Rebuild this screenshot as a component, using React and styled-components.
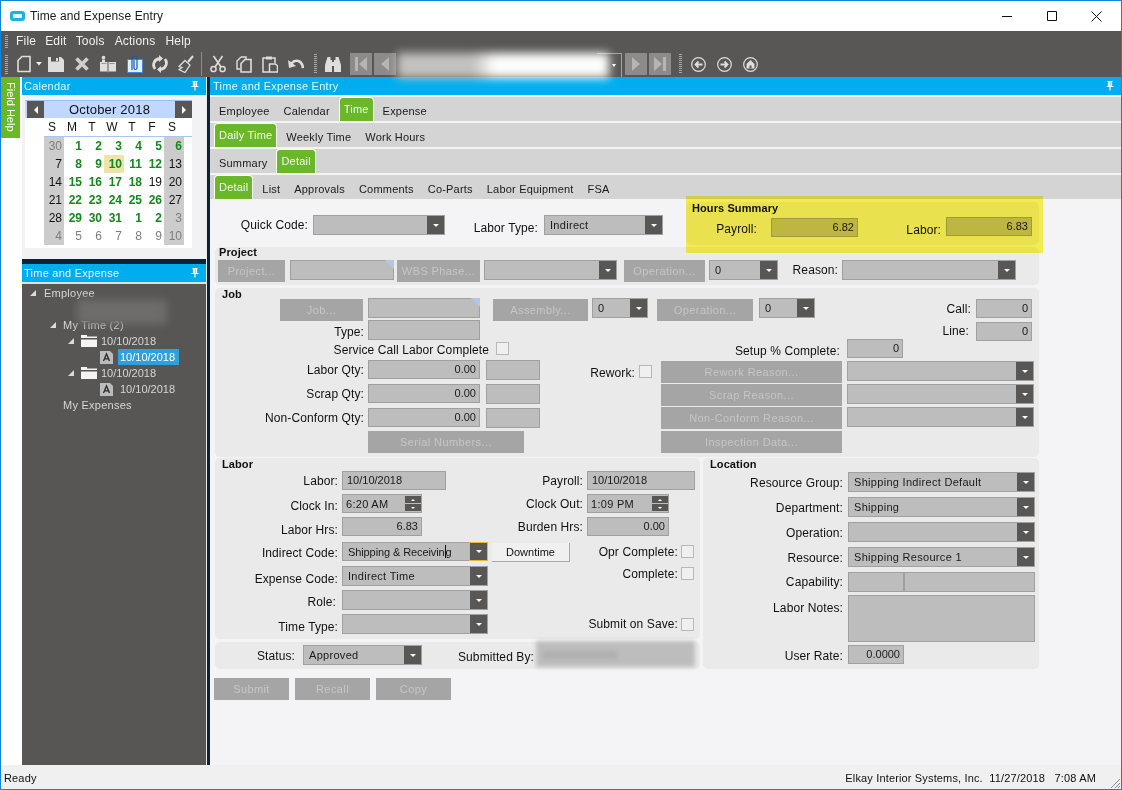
import React from 'react'
import styled, { createGlobalStyle, css } from 'styled-components'

const GlobalStyle = createGlobalStyle`
  html, body { margin: 0; padding: 0; background: #fff; }
  body { font-family: "Liberation Sans", Arial, sans-serif; font-size: 12px; color: #101010; }
  * { box-sizing: border-box; }
`

// every form part sits in a row and is nudged by these two
const nudge = css`
  flex: none;
  margin-left: ${p => p.$ml || 0}px;
  margin-top: ${p => p.$mt || 0}px;
`

const Win = styled.div`
  width: 1122px;
  height: 790px;
  border: 1px solid #0f85d8;
  display: flex;
  flex-direction: column;
  overflow: hidden;
  position: relative;
`
const TitleBar = styled.div`
  height: 30px;
  display: flex;
  align-items: center;
  background: #fff;
  flex: none;
`
const AppMark = styled.span`
  width: 15px;
  height: 10px;
  margin-left: 9px;
  background: #17b4e8;
  border-radius: 3px;
  display: flex;
  align-items: center;
  justify-content: center;
  &::after { content: ''; width: 9px; height: 4px; background: #e8f8fe; border-radius: 1px; }
`
const TitleText = styled.span`
  margin-left: 5px;
  font-size: 12px;
  letter-spacing: .1px;
  flex: 1;
  color: #1a1a1a;
`
const WinBtn = styled.span`
  width: 45px;
  height: 30px;
  display: flex;
  align-items: center;
  justify-content: center;
`
const WinEdge = styled.span`
  width: 2px;
`
const MenuBar = styled.div`
  height: 20px;
  background: #595755;
  display: flex;
  align-items: center;
  color: #f0f0f0;
  flex: none;
`
const MenuItem = styled.span`
  ${nudge}
  font-size: 12px;
  letter-spacing: .2px;
`
const Grip = styled.span`
  ${nudge}
  width: 3px;
  height: ${p => p.$h || 18}px;
  background: repeating-linear-gradient(to bottom, #a8a8a8 0 1px, transparent 1px 2px);
`
const ToolBar = styled.div`
  height: 26px;
  background: #595755;
  display: flex;
  align-items: center;
  flex: none;
  position: relative;
`
const Ic = styled.svg`
  ${nudge}
  width: ${p => p.$w || 16}px;
  height: ${p => p.$h || 18}px;
  display: block;
`
const ToolSep = styled.span`
  ${nudge}
  width: 1px;
  height: 24px;
  background: #908e8c;
`
const NavBtn = styled.span`
  ${nudge}
  width: 22px;
  height: 22px;
  background: #8d8b89;
  display: flex;
  align-items: center;
  justify-content: center;
`
const ToolCombo = styled.span`
  flex: none;
  width: 226px;
  height: 23px;
  position: relative;
  &::before {
    content: '';
    position: absolute;
    right: 0;
    top: 0;
    width: 24px;
    height: 23px;
    border: 1px solid #a5a3a1;
    border-left: 0;
  }
  &::after {
    content: '';
    position: absolute;
    right: 6px;
    top: 11px;
    border-top: 3px solid #fff;
    border-left: 2px solid transparent;
    border-right: 2px solid transparent;
  }
`
const ToolSmudge = styled.span`
  position: absolute;
  left: 1px;
  top: 0;
  width: 212px;
  height: 25px;
  background: linear-gradient(to right, #c4c2c0 0 36%, #fdfdfd 46%);
  filter: blur(5px);
  z-index: 3;
`
const Body = styled.div`
  flex: 1;
  display: flex;
  min-height: 0;
  background: #fff;
`
const HelpCol = styled.div`
  width: 21px;
  flex: none;
`
const HelpTab = styled.div`
  width: 19px;
  height: 61px;
  background: #6ab82a;
  color: #fff;
  font-size: 11px;
  writing-mode: vertical-rl;
  display: flex;
  align-items: center;
  padding-top: 5px;
`
const SideCol = styled.div`
  width: 184px;
  flex: none;
  display: flex;
  flex-direction: column;
  background: #0b2438;
`
const Splitter = styled.div`
  width: 4px;
  flex: none;
  background: #0b2438;
  border-left: 1px solid #e8e8e8;
`
const PaneHead = styled.div`
  height: 18px;
  background: #00aeef;
  color: #e6f7ff;
  font-size: 11px;
  letter-spacing: .25px;
  padding: 0 7px 0 ${p => p.$pl || 2}px;
  display: flex;
  align-items: center;
  justify-content: space-between;
  flex: none;
`
const Pin = () => (
  <svg width="8" height="10" viewBox="0 0 8 10">
    <path d="M1.500 0.500h5M2.500 0.500v5M5.500 0.500v5M0.500 5.500h7M4 5.500v4" stroke="#fff" strokeWidth="1.200" fill="none" />
    <rect x="2.500" y="1" width="2" height="4.500" fill="#fff" />
  </svg>
)
const CalPane = styled.div`
  height: 164px;
  background: #f2f2f4;
  padding: 5px 14px 0 3px;
  flex: none;
`
const CalBox = styled.div`
  background: #fff;
  height: 148px;
`
const CalHead = styled.div`
  height: 18px;
  background: #c0d8ff;
  display: flex;
  align-items: center;
  justify-content: space-between;
  border-top: 1px solid #9dbdf0;
  font-size: 13px;
  letter-spacing: .2px;
`
const CalArrow = styled.span`
  width: 17px;
  height: 17px;
  margin-left: ${p => (p.$left ? 2 : 0)}px;
  background: #595755;
  display: flex;
  align-items: center;
  justify-content: center;
  &::after {
    content: '';
    border-top: 4px solid transparent;
    border-bottom: 4px solid transparent;
    ${p => (p.$left ? 'border-right: 4px solid #fff;' : 'border-left: 4px solid #fff;')}
  }
`
const DayHead = styled.div`
  display: grid;
  grid-template-columns: repeat(7, 20px);
  margin-left: 19px;
  height: 19px;
  border-bottom: 1px solid #a8c6f5;
  font-size: 12px;
  text-align: center;
  line-height: 18px;
  span { padding-right: 4px; }
`
const Weeks = styled.div`
  display: grid;
  grid-template-columns: repeat(7, 20px);
  grid-auto-rows: 18px;
  margin-left: 19px;
`
const Day = styled.span`
  font-size: 12px;
  line-height: 18px;
  text-align: right;
  padding-right: 2px;
  background: ${p => (p.$today ? '#ece4a8' : p.$end ? '#cccccc' : 'transparent')};
  color: ${p => (p.$kind === 'g' ? '#17861e' : p.$kind === 'o' ? '#7d7d7d' : '#121212')};
  font-weight: ${p => (p.$kind === 'g' ? 700 : 400)};
`
const PaneGap = styled.div`
  height: 5px;
  flex: none;
`
const Tree = styled.div`
  flex: 1;
  background: #585654;
  border-top: 2px solid #e0e0e0;
  padding-top: 1px;
  color: #d6d6d6;
  font-size: 11px;
`
const TreeRow = styled.div`
  height: 16px;
  display: flex;
  align-items: center;
  padding-left: ${p => p.$pl || 0}px;
  position: relative;
`
const TreeText = styled.span`
  margin-left: ${p => p.$ml || 0}px;
  padding: 0 ${p => (p.$sel ? '4px 0 2px' : '0')};
  height: 16px;
  line-height: 16px;
  letter-spacing: ${p => (p.$num ? '0' : '.25px')};
  color: ${p => (p.$sel ? '#fff' : '#d6d6d6')};
  background: ${p => (p.$sel ? '#2ea0dc' : 'transparent')};
`
const TreeSmudge = styled.span`
  position: absolute;
  left: 55px;
  top: -1px;
  width: 90px;
  height: 24px;
  background: #6f6d6b;
  filter: blur(4px);
  z-index: 2;
`
const Caret = () => (
  <svg width="6" height="6" viewBox="0 0 6 6" style={{ flex: 'none' }}>
    <path d="M0 6L6 0V6Z" fill="#dcdcdc" />
  </svg>
)
const Folder = () => (
  <Ic $ml={7} $w={16} $h={12} viewBox="0 0 16 12">
    <path d="M0 0h6v1.500h10V3H0z M0 4.500h16V12H0z" fill="#f4f4f4" />
  </Ic>
)
const DocA = () => (
  <svg width="13" height="13" viewBox="0 0 13 13" style={{ flex: 'none' }}>
    <path d="M0 0h10l3 3v10H0z" fill="#bcbcbc" />
    <path d="M3.500 10L6.500 3l3 7M4.800 7.800h3.600" stroke="#2a2a2a" strokeWidth="1.300" fill="none" />
  </svg>
)

const Main = styled.div`
  flex: 1;
  min-width: 0;
  background: #f4f4f6;
  display: flex;
  flex-direction: column;
  position: relative;
`
const TabRow = styled.div`
  height: 24px;
  flex: none;
  margin-top: 2px;
  background: #d4d4d4;
  display: flex;
  gap: 4px;
  padding-left: 4px;
  align-items: stretch;
`
const Tab = styled.span`
  padding: 0 5px;
  font-size: 11px;
  letter-spacing: .2px;
  line-height: 28px;
  color: #1a1a1a;
  ${p => p.$on && css`
    background: #6ab82a;
    color: #f2fbe8;
    border: 1px solid #fff;
    border-bottom: 0;
    border-radius: 4px 4px 0 0;
    padding: 0 4px;
    line-height: 22px;
  `}
`
const Form = styled.div`
  padding-left: 5px;
  width: 829px;
  flex: none;
`
const TopRow = styled.div`
  height: 48px;
  display: flex;
  align-items: flex-start;
`
const Panel = styled.div`
  ${nudge}
  width: ${p => p.$w || 824}px;
  height: ${p => p.$h}px;
  background: #eaeaea;
  border-radius: 5px;
  position: relative;
`
const PanelTitle = styled.div`
  height: ${p => p.$h || 13}px;
  line-height: ${p => p.$lh || 13}px;
  padding-left: ${p => p.$pl || 4}px;
  font-size: 11px;
  font-weight: 700;
  letter-spacing: .1px;
`
const Row = styled.div`
  display: flex;
  align-items: flex-start;
  height: ${p => p.$h || 24}px;
`
const Label = styled.span`
  ${nudge}
  width: ${p => p.$w}px;
  height: 19px;
  line-height: 21px;
  text-align: right;
  white-space: nowrap;
  font-size: 12px;
  letter-spacing: .1px;
`
const box = css`
  ${nudge}
  width: ${p => p.$w}px;
  height: ${p => p.$h || 20}px;
  background: #bdbdbd;
  border: 1px solid #a0a0a0;
  font-size: 11px;
  color: #1a1a1a;
`
const Field = styled.span`
  ${box}
  display: block;
  position: relative;
  line-height: ${p => (p.$h || 20) - 2}px;
  text-align: ${p => (p.$left ? 'left' : 'right')};
  padding: ${p => (p.$left ? '0 0 0 4px' : '0 3px 0 0')};
  ${p => p.$corner && css`
    &::after {
      content: '';
      position: absolute;
      top: -1px;
      right: -1px;
      border-top: 9px solid #b0c8e4;
      border-left: 9px solid transparent;
    }
  `}
`
const ComboBox = styled.span`
  ${box}
  display: flex;
  align-items: stretch;
`
const ComboValue = styled.span`
  flex: 1;
  padding-left: ${p => p.$pl || 5}px;
  line-height: 18px;
  letter-spacing: .3px;
  white-space: nowrap;
  overflow: hidden;
`
const ComboArrow = styled.span`
  width: 17px;
  background: #595755;
  flex: none;
  display: flex;
  align-items: center;
  justify-content: center;
  ${p => p.$focus && 'outline: 1px solid #e8b830;'}
  &::after {
    content: '';
    border-top: 3px solid #fff;
    border-left: 3px solid transparent;
    border-right: 3px solid transparent;
  }
`
const TightText = styled.span`
  letter-spacing: -.1px;
`
const TextCaret = styled.span`
  display: inline-block;
  width: 0;
  height: 13px;
  border-left: 1px solid #111;
  vertical-align: -2px;
`
const Combo = ({ value, pl, focus, children, ...rest }) => (
  <ComboBox {...rest}>
    <ComboValue $pl={pl}>{children || value}</ComboValue>
    <ComboArrow $focus={focus} />
  </ComboBox>
)
const SpinCol = styled.span`
  width: 16px;
  flex: none;
  display: flex;
  flex-direction: column;
  justify-content: space-between;
  padding: 1px 0;
`
const SpinBit = styled.span`
  height: 7px;
  background: #595755;
  display: flex;
  align-items: center;
  justify-content: center;
  &::after {
    content: '';
    border-left: 2px solid transparent;
    border-right: 2px solid transparent;
    ${p => (p.$up ? 'border-bottom: 2px solid #fff;' : 'border-top: 2px solid #fff;')}
  }
`
const Spin = ({ value, ...rest }) => (
  <ComboBox {...rest}>
    <ComboValue $pl={3}>{value}</ComboValue>
    <SpinCol><SpinBit $up /><SpinBit /></SpinCol>
  </ComboBox>
)
const Btn = styled.span`
  ${nudge}
  width: ${p => p.$w}px;
  height: ${p => p.$h || 22}px;
  background: #a5a5a5;
  color: #c6c6c6;
  font-size: 11px;
  letter-spacing: .4px;
  display: flex;
  align-items: center;
  justify-content: center;
`
const PlainBtn = styled.span`
  ${nudge}
  width: ${p => p.$w}px;
  height: 19px;
  background: #f0f0f0;
  border-right: 1px solid #a8a8a8;
  border-bottom: 1px solid #a8a8a8;
  font-size: 11px;
  display: flex;
  align-items: center;
  justify-content: center;
`
const Check = styled.span`
  ${nudge}
  width: 13px;
  height: 13px;
  background: #f0f0f0;
  border: 1px solid #b8b8b8;
`
const BlurBox = styled.span`
  ${nudge}
  width: ${p => p.$w}px;
  height: 26px;
  position: relative;
  background: #bdbdbd;
  filter: blur(2px);
  &::after {
    content: '';
    position: absolute;
    left: 6px;
    top: 10px;
    width: 76px;
    height: 8px;
    background: #b0b0b0;
  }
`
const Highlight = styled.div`
  position: absolute;
  left: 0;
  top: -6px;
  width: 357px;
  height: 57px;
  background: rgb(255, 246, 86);
  mix-blend-mode: multiply;
  pointer-events: none;
  z-index: 5;
`
const Columns = styled.div`
  display: flex;
  align-items: flex-start;
  margin-top: 1px;
`
const LeftStack = styled.div`
  width: 485px;
  flex: none;
`
const ButtonBar = styled.div`
  display: flex;
  gap: 6px;
  margin-top: 9px;
  margin-left: -1px;
`
const StatusBar = styled.div`
  height: 24px;
  flex: none;
  background: #f0f0f0;
  display: flex;
  align-items: center;
  justify-content: space-between;
  padding: 2px 25px 0 3px;
  font-size: 11px;
  letter-spacing: .15px;
  position: relative;
`
const ResizeGrip = styled.svg`
  position: absolute;
  right: 0;
  bottom: 0;
  width: 11px;
  height: 11px;
`

const WEEKS = [
  [['30', 'o'], ['1', 'g'], ['2', 'g'], ['3', 'g'], ['4', 'g'], ['5', 'g'], ['6', 'g']],
  [['7'], ['8', 'g'], ['9', 'g'], ['10', 'g'], ['11', 'g'], ['12', 'g'], ['13']],
  [['14'], ['15', 'g'], ['16', 'g'], ['17', 'g'], ['18', 'g'], ['19'], ['20']],
  [['21'], ['22', 'g'], ['23', 'g'], ['24', 'g'], ['25', 'g'], ['26', 'g'], ['27']],
  [['28'], ['29', 'g'], ['30', 'g'], ['31', 'g'], ['1', 'g'], ['2', 'g'], ['3', 'o']],
  [['4', 'o'], ['5', 'o'], ['6', 'o'], ['7', 'o'], ['8', 'o'], ['9', 'o'], ['10', 'o']],
]

function Toolbar() {
  const c = '#dedede'
  return (
    <ToolBar>
      <Grip $ml={4} $h={19} />
      <Ic $ml={8} viewBox="0 0 16 18">
        <path d="M6 1.500H14V16.500H2V5.500Z" fill="none" stroke={c} strokeWidth="1.600" />
      </Ic>
      <Ic $ml={4} $w={6} $h={4} viewBox="0 0 6 4"><path d="M0 0h6L3 3.500z" fill="#eee" /></Ic>
      <Ic $ml={6} viewBox="0 0 16 18">
        <path d="M0 2h13l3 3v12H0z" fill={c} />
        <path d="M3 2h8v4.500H3z" fill="#595755" />
        <path d="M8 3h2v3H8z" fill={c} />
      </Ic>
      <Ic $ml={10} viewBox="0 0 16 18">
        <path d="M2.500 3.500l11 11M13.500 3.500l-11 11" stroke="#cfcfcf" strokeWidth="3.600" />
      </Ic>
      <Ic $ml={10} viewBox="0 0 16 18">
        <path d="M0 7h7l1 1 1-1h7v9.500H9l-1 1-1-1H0z" fill={c} />
        <path d="M8 8v9.500" stroke="#595755" />
        <path d="M1.500 8.500h5M9.500 8.500h5" stroke="#9a9896" />
        <circle cx="3.500" cy="2.500" r="1.800" fill={c} />
        <path d="M2 4.500h3V7H2z" fill={c} />
      </Ic>
      <Ic $ml={11} viewBox="0 0 16 18">
        <path d="M0.500 4.500h15v13H0.500z" fill="#e2f0fc" stroke="#3a8ae0" />
        <path d="M5 15V3.500a2.500 2.500 0 015 0V13a1.500 1.500 0 01-3 0V5" fill="none" stroke="#1a56c0" strokeWidth="1.200" />
      </Ic>
      <Ic $ml={9} viewBox="0 0 16 18">
        <path d="M3 14C0 10 2 4 8 3.500M13 4c3 4 1 10-5 10.500" fill="none" stroke={c} strokeWidth="2.800" />
        <path d="M7 0v7l4-3.500zM9 11v7l-4-3.500z" fill={c} />
      </Ic>
      <Ic $ml={10} viewBox="0 0 16 18">
        <path d="M10 7l5-6" stroke={c} strokeWidth="2" />
        <path d="M7 5.500l5 4.500-5 7.500-6-3 3-2-3-1z" fill="none" stroke={c} strokeWidth="1.300" />
      </Ic>
      <ToolSep $ml={7} />
      <Ic $ml={8} viewBox="0 0 16 18">
        <circle cx="3.500" cy="14" r="2.600" fill="none" stroke={c} strokeWidth="1.500" />
        <circle cx="12.500" cy="14" r="2.600" fill="none" stroke={c} strokeWidth="1.500" />
        <path d="M5 12L12.500 1M11 12L3.500 1" stroke={c} strokeWidth="1.600" />
      </Ic>
      <Ic $ml={10} viewBox="0 0 16 18">
        <path d="M5 2h5v2M5 2L1 6v8h3" fill="none" stroke={c} strokeWidth="1.400" />
        <path d="M9 4.500h6v12.500H5V8.500z" fill="none" stroke={c} strokeWidth="1.600" />
      </Ic>
      <Ic $ml={10} viewBox="0 0 16 18">
        <path d="M4 3H1v14h6M10 3h3v5" fill="none" stroke={c} strokeWidth="1.500" />
        <path d="M4 1.500h6v3H4z" fill={c} />
        <path d="M7.500 9h6l2 2v6h-8z" fill="none" stroke={c} strokeWidth="1.500" />
      </Ic>
      <Ic $ml={10} viewBox="0 0 16 18">
        <path d="M3.500 8.500C7 4 14 5 15 13" fill="none" stroke={c} strokeWidth="2.600" />
        <path d="M0 5l1 8 7-2z" fill={c} />
      </Ic>
      <Grip $ml={10} $h={20} />
      <Ic $ml={8} viewBox="0 0 16 18">
        <path d="M2.500 2h3v3h1.500v12H0v-7zM10.500 2h3v0l2.500 8v7H9V5h1.500z" fill={c} />
        <path d="M7 7h2v4H7z" fill={c} />
      </Ic>
      <NavBtn $ml={9}>
        <svg width="12" height="14" viewBox="0 0 12 14"><path d="M0 0h3v14H0zM12 0v14L4 7z" fill="#b7b5b3" /></svg>
      </NavBtn>
      <NavBtn $ml={2}>
        <svg width="8" height="14" viewBox="0 0 8 14"><path d="M8 0v14L0 7z" fill="#b7b5b3" /></svg>
      </NavBtn>
      <ToolCombo><ToolSmudge /></ToolCombo>
      <NavBtn $ml={3}>
        <svg width="8" height="14" viewBox="0 0 8 14"><path d="M0 0v14l8-7z" fill="#b7b5b3" /></svg>
      </NavBtn>
      <NavBtn $ml={2}>
        <svg width="12" height="14" viewBox="0 0 12 14"><path d="M9 0h3v14H9zM0 0v14l8-7z" fill="#b7b5b3" /></svg>
      </NavBtn>
      <Grip $ml={8} $h={20} />
      <Ic $ml={9} $w={15} $h={15} viewBox="0 0 15 15">
        <circle cx="7.500" cy="7.500" r="6.800" fill="none" stroke={c} strokeWidth="1.200" />
        <path d="M11.500 7.500H5M7.500 4.500l-3 3 3 3" fill="none" stroke={c} strokeWidth="1.800" />
      </Ic>
      <Ic $ml={11} $w={15} $h={15} viewBox="0 0 15 15">
        <circle cx="7.500" cy="7.500" r="6.800" fill="none" stroke={c} strokeWidth="1.200" />
        <path d="M3.500 7.500H10M7.500 4.500l3 3-3 3" fill="none" stroke={c} strokeWidth="1.800" />
      </Ic>
      <Ic $ml={11} $w={15} $h={15} viewBox="0 0 15 15">
        <circle cx="7.500" cy="7.500" r="6.800" fill="none" stroke={c} strokeWidth="1.200" />
        <path d="M7.500 3L3.500 7v4.500h8V7z" fill={c} />
        <path d="M6.500 8.500h2v3h-2z" fill="#595755" />
      </Ic>
    </ToolBar>
  )
}

function Sidebar() {
  return (
    <SideCol>
      <PaneHead>Calendar<Pin /></PaneHead>
      <CalPane>
        <CalBox>
          <CalHead>
            <CalArrow $left />
            October 2018
            <CalArrow />
          </CalHead>
          <DayHead>
            {['S', 'M', 'T', 'W', 'T', 'F', 'S'].map((d, i) => <span key={i}>{d}</span>)}
          </DayHead>
          <Weeks>
            {WEEKS.map((w, r) => w.map(([n, k], i) => (
              <Day key={r + '-' + i} $kind={k} $end={i === 0 || i === 6} $today={r === 1 && i === 3}>{n}</Day>
            )))}
          </Weeks>
        </CalBox>
      </CalPane>
      <PaneGap />
      <PaneHead>Time and Expense<Pin /></PaneHead>
      <Tree>
        <TreeRow $pl={8}><Caret /><TreeText $ml={8}>Employee</TreeText></TreeRow>
        <TreeRow><TreeSmudge /></TreeRow>
        <TreeRow $pl={28}><Caret /><TreeText $ml={7}>My Time (2)</TreeText></TreeRow>
        <TreeRow $pl={46}><Caret /><Folder /><TreeText $ml={4} $num>10/10/2018</TreeText></TreeRow>
        <TreeRow $pl={78}><DocA /><TreeText $ml={5} $num $sel>10/10/2018</TreeText></TreeRow>
        <TreeRow $pl={46}><Caret /><Folder /><TreeText $ml={4} $num>10/10/2018</TreeText></TreeRow>
        <TreeRow $pl={78}><DocA /><TreeText $ml={7} $num>10/10/2018</TreeText></TreeRow>
        <TreeRow $pl={41}><TreeText>My Expenses</TreeText></TreeRow>
      </Tree>
    </SideCol>
  )
}

function JobPanel() {
  return (
    <Panel $mt={3} $h={169}>
      <PanelTitle $h={10} $pl={7}>Job</PanelTitle>
      <Row $h={22}>
        <Btn $ml={65} $mt={1} $w={83}>Job...</Btn>
        <Field $ml={5} $w={112} $corner />
        <Btn $ml={13} $mt={1} $w={95}>Assembly...</Btn>
        <Combo $ml={4} $w={56} value="0" />
        <Btn $ml={9} $mt={1} $w={96}>Operation...</Btn>
        <Combo $ml={6} $w={56} value="0" />
        <Label $w={156} $mt={1}>Call:</Label>
        <Field $ml={5} $mt={1} $w={56} $h={19}>0</Field>
      </Row>
      <Row $h={21}>
        <Label $w={149} $mt={2}>Type:</Label>
        <Field $ml={4} $w={112} />
        <Label $w={489} $mt={1}>Line:</Label>
        <Field $ml={7} $mt={2} $w={56} $h={19}>0</Field>
      </Row>
      <Row $h={19}>
        <Label $w={274} $mt={-1}>Service Call Labor Complete</Label>
        <Check $ml={7} $mt={1} />
        <Label $w={331}>Setup % Complete:</Label>
        <Field $ml={7} $mt={-2} $w={56} $h={19}>0</Field>
      </Row>
      <Row $h={24}>
        <Label $w={149}>Labor Qty:</Label>
        <Field $ml={4} $w={112} $h={19}>0.00</Field>
        <Field $ml={6} $w={54} />
        <Label $w={95} $mt={3}>Rework:</Label>
        <Check $ml={4} $mt={5} />
        <Btn $ml={9} $mt={1} $w={181}>Rework Reason...</Btn>
        <Combo $ml={5} $mt={1} $w={187} />
      </Row>
      <Row $h={23}>
        <Label $w={149}>Scrap Qty:</Label>
        <Field $ml={4} $w={112} $h={19}>0.00</Field>
        <Field $ml={6} $w={54} />
        <Btn $ml={121} $w={181}>Scrap Reason...</Btn>
        <Combo $ml={5} $w={187} />
      </Row>
      <Row $h={24}>
        <Label $w={149} $mt={1}>Non-Conform Qty:</Label>
        <Field $ml={4} $mt={1} $w={112} $h={19}>0.00</Field>
        <Field $ml={6} $mt={1} $w={54} />
        <Btn $ml={121} $w={181}>Non-Conform Reason...</Btn>
        <Combo $ml={5} $w={187} />
      </Row>
      <Row $h={22}>
        <Btn $ml={153} $w={156}>Serial Numbers...</Btn>
        <Btn $ml={137} $w={181}>Inspection Data...</Btn>
      </Row>
    </Panel>
  )
}

function LaborPanel() {
  return (
    <Panel $w={485} $h={181}>
      <PanelTitle $pl={7}>Labor</PanelTitle>
      <Row $h={23}>
        <Label $w={123}>Labor:</Label>
        <Field $ml={4} $w={104} $h={19} $left>10/10/2018</Field>
        <Label $w={137}>Payroll:</Label>
        <Field $ml={4} $w={108} $h={19} $left>10/10/2018</Field>
      </Row>
      <Row $h={23}>
        <Label $w={123} $mt={2}>Clock In:</Label>
        <Spin $ml={4} $w={80} $h={19} value="6:20 AM" />
        <Label $w={161}>Clock Out:</Label>
        <Spin $ml={4} $w={82} $h={19} value="1:09 PM" />
      </Row>
      <Row $h={25}>
        <Label $w={123} $mt={3}>Labor Hrs:</Label>
        <Field $ml={4} $w={80} $h={19}>6.83</Field>
        <Label $w={161}>Burden Hrs:</Label>
        <Field $ml={4} $w={82} $h={19}>0.00</Field>
      </Row>
      <Row $h={24}>
        <Label $w={123} $mt={1}>Indirect Code:</Label>
        <Combo $ml={4} $w={146} $h={19} focus><TightText>Shipping &amp; Receivin<TextCaret />g</TightText></Combo>
        <PlainBtn $ml={4} $mt={1} $w={78}>Downtime</PlainBtn>
        <Label $w={108}>Opr Complete:</Label>
        <Check $ml={3} $mt={3} />
      </Row>
      <Row $h={24}>
        <Label $w={123} $mt={3}>Expense Code:</Label>
        <Combo $ml={4} $w={146} value="Indirect Time" />
        <Label $w={190} $mt={-2}>Complete:</Label>
        <Check $ml={3} $mt={1} />
      </Row>
      <Row $h={24}>
        <Label $w={121} $mt={2}>Role:</Label>
        <Combo $ml={6} $w={146} />
      </Row>
      <Row $h={25}>
        <Label $w={123} $mt={3}>Time Type:</Label>
        <Combo $ml={4} $w={146} />
        <Label $w={190}>Submit on Save:</Label>
        <Check $ml={3} $mt={4} />
      </Row>
    </Panel>
  )
}

function LocationPanel() {
  return (
    <Panel $w={336} $ml={3} $h={211}>
      <PanelTitle $h={14} $pl={7}>Location</PanelTitle>
      <Row $h={25}><Label $w={140} $mt={1}>Resource Group:</Label><Combo $ml={5} $w={187} value="Shipping Indirect Default" /></Row>
      <Row $h={25}><Label $w={140} $mt={1}>Department:</Label><Combo $ml={5} $w={187} value="Shipping" /></Row>
      <Row $h={25}><Label $w={140} $mt={1}>Operation:</Label><Combo $ml={5} $w={187} /></Row>
      <Row $h={25}><Label $w={140} $mt={1}>Resource:</Label><Combo $ml={5} $w={187} value="Shipping Resource 1" /></Row>
      <Row $h={23}>
        <Label $w={140}>Capability:</Label>
        <Field $ml={5} $w={56} />
        <Field $w={131} />
      </Row>
      <Row $h={50}>
        <Label $w={140} $mt={3}>Labor Notes:</Label>
        <Field $ml={5} $w={187} $h={47} />
      </Row>
      <Row $h={20}>
        <Label $w={140} $mt={1}>User Rate:</Label>
        <Field $ml={5} $w={56} $h={19}>0.0000</Field>
      </Row>
    </Panel>
  )
}

export default function App() {
  return (
    <>
      <GlobalStyle />
      <Win>
        <TitleBar>
          <AppMark />
          <TitleText>Time and Expense Entry</TitleText>
          <WinBtn><svg width="10" height="10" viewBox="0 0 10 10"><path d="M0 5.500h10" stroke="#111" /></svg></WinBtn>
          <WinBtn><svg width="10" height="10" viewBox="0 0 10 10"><path d="M.5.5h9v9h-9z" fill="none" stroke="#111" /></svg></WinBtn>
          <WinBtn><svg width="11" height="11" viewBox="0 0 11 11"><path d="M.5.5l10 10M10.500.5l-10 10" stroke="#111" /></svg></WinBtn>
          <WinEdge />
        </TitleBar>
        <MenuBar>
          <Grip $ml={4} $h={13} />
          <MenuItem $ml={8}>File</MenuItem>
          <MenuItem $ml={9}>Edit</MenuItem>
          <MenuItem $ml={9}>Tools</MenuItem>
          <MenuItem $ml={10}>Actions</MenuItem>
          <MenuItem $ml={10}>Help</MenuItem>
        </MenuBar>
        <Toolbar />
        <Body>
          <HelpCol><HelpTab>Field Help</HelpTab></HelpCol>
          <Sidebar />
          <Splitter />
          <Main>
            <PaneHead $pl={3}>Time and Expense Entry<Pin /></PaneHead>
            <TabRow>
              <Tab>Employee</Tab><Tab>Calendar</Tab><Tab $on>Time</Tab><Tab>Expense</Tab>
            </TabRow>
            <TabRow>
              <Tab $on>Daily Time</Tab><Tab>Weekly Time</Tab><Tab>Work Hours</Tab>
            </TabRow>
            <TabRow>
              <Tab>Summary</Tab><Tab $on>Detail</Tab>
            </TabRow>
            <TabRow>
              <Tab $on>Detail</Tab><Tab>List</Tab><Tab>Approvals</Tab><Tab>Comments</Tab><Tab>Co-Parts</Tab><Tab>Labor Equipment</Tab><Tab>FSA</Tab>
            </TabRow>
            <Form>
              <TopRow>
                <Label $w={93} $mt={16}>Quick Code:</Label>
                <Combo $ml={5} $mt={16} $w={132} />
                <Label $w={93} $mt={19}>Labor Type:</Label>
                <Combo $ml={6} $mt={16} $w={119} value="Indirect" />
                <Panel $ml={23} $mt={3} $w={353} $h={43}>
                  <PanelTitle $pl={6}>Hours Summary</PanelTitle>
                  <Row $h={26}>
                    <Label $w={71} $mt={4}>Payroll:</Label>
                    <Field $ml={14} $mt={3} $w={87} $h={19}>6.82</Field>
                    <Label $w={83} $mt={5}>Labor:</Label>
                    <Field $ml={5} $mt={2} $w={86} $h={19}>6.83</Field>
                  </Row>
                  <Highlight />
                </Panel>
              </TopRow>
              <Panel $h={38}>
                <PanelTitle $lh={11}>Project</PanelTitle>
                <Row $h={25}>
                  <Btn $ml={3} $w={67}>Project...</Btn>
                  <Field $ml={5} $w={104} $corner />
                  <Btn $ml={3} $w={83}>WBS Phase...</Btn>
                  <Combo $ml={4} $w={133} />
                  <Btn $ml={7} $w={81}>Operation...</Btn>
                  <Combo $ml={4} $w={69} value="0" />
                  <Label $w={60}>Reason:</Label>
                  <Combo $ml={4} $w={174} />
                </Row>
              </Panel>
              <JobPanel />
              <Columns>
                <LeftStack>
                  <LaborPanel />
                  <Panel $w={485} $mt={3} $h={27}>
                    <Row $h={27}>
                      <Label $w={80} $mt={4}>Status:</Label>
                      <Combo $ml={8} $mt={3} $w={119} value="Approved" />
                      <Label $w={112} $mt={5}>Submitted By:</Label>
                      <BlurBox $ml={2} $mt={-1} $w={159} />
                    </Row>
                  </Panel>
                </LeftStack>
                <LocationPanel />
              </Columns>
              <ButtonBar>
                <Btn $w={75}>Submit</Btn>
                <Btn $w={75}>Recall</Btn>
                <Btn $w={75}>Copy</Btn>
              </ButtonBar>
            </Form>
          </Main>
        </Body>
        <StatusBar>
          <span>Ready</span>
          <span>Elkay Interior Systems, Inc.&nbsp; 11/27/2018 &nbsp; 7:08 AM</span>
          <ResizeGrip viewBox="0 0 11 11"><path d="M10 1L1 10M10 5L5 10M10 8L8 10" stroke="#8a8a8a" /></ResizeGrip>
        </StatusBar>
      </Win>
    </>
  )
}
